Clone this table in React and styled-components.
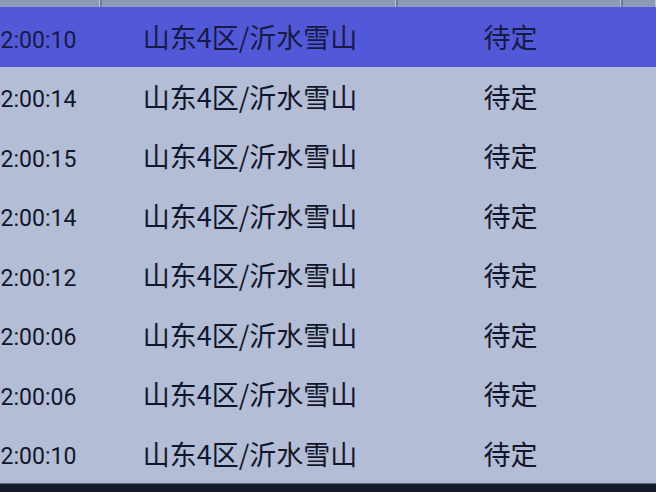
import React from "react";
import styled, { createGlobalStyle } from "styled-components";

const GlobalStyle = createGlobalStyle`
  html, body {
    margin: 0;
    padding: 0;
    background: #b3bdd6;
    overflow: hidden;
  }
  body {
    font-family: "Noto Sans CJK SC", "Noto Sans", sans-serif;
  }
`;

const Screen = styled.div`
  width: 656px;
  height: 492px;
  overflow: hidden;
  display: flex;
  flex-direction: column;
  background: #b3bdd6;
`;

const Table = styled.div`
  margin-left: -38px;
  display: grid;
  grid-template-columns: 140px 296px 225px 1fr;
`;

const HeadCell = styled.div`
  height: 7px;
  background: #8d99b6;
  border-right: ${(p) => (p.$last ? "none" : "2px solid #6f7a97")};
  box-shadow: inset -1px 0 0 #b9c2d8;
`;

const Cell = styled.div`
  box-sizing: border-box;
  height: 59.5px;
  padding-top: ${(p) => (p.$time ? "7px" : "0")};
  display: flex;
  align-items: center;
  justify-content: center;
  background: ${(p) => (p.$active ? "#5159d9" : "#b3bdd6")};
  color: ${(p) => (p.$active ? "#171a45" : "#12162a")};
  font-family: ${(p) =>
    p.$time ? "Roboto, \"Noto Sans\", sans-serif" : "\"Noto Sans CJK SC\", sans-serif"};
  font-size: ${(p) => (p.$time ? "23px" : "27px")};
  white-space: nowrap;
  line-height: 1;
`;

const Footer = styled.div`
  flex: 1;
  background: #131a29;
  border-top: 1px solid #5d6884;
`;

const rows = [
  "12:00:10",
  "12:00:14",
  "12:00:15",
  "12:00:14",
  "12:00:12",
  "12:00:06",
  "12:00:06",
  "12:00:10",
];

export default function App() {
  return (
    <Screen>
      <GlobalStyle />
      <Table>
        <HeadCell />
        <HeadCell />
        <HeadCell />
        <HeadCell $last />
        {rows.map((t, i) => (
          <React.Fragment key={i}>
            <Cell $active={i === 0} $time>
              {t}
            </Cell>
            <Cell $active={i === 0}>山东4区/沂水雪山</Cell>
            <Cell $active={i === 0}>待定</Cell>
            <Cell $active={i === 0} />
          </React.Fragment>
        ))}
      </Table>
      <Footer />
    </Screen>
  );
}
